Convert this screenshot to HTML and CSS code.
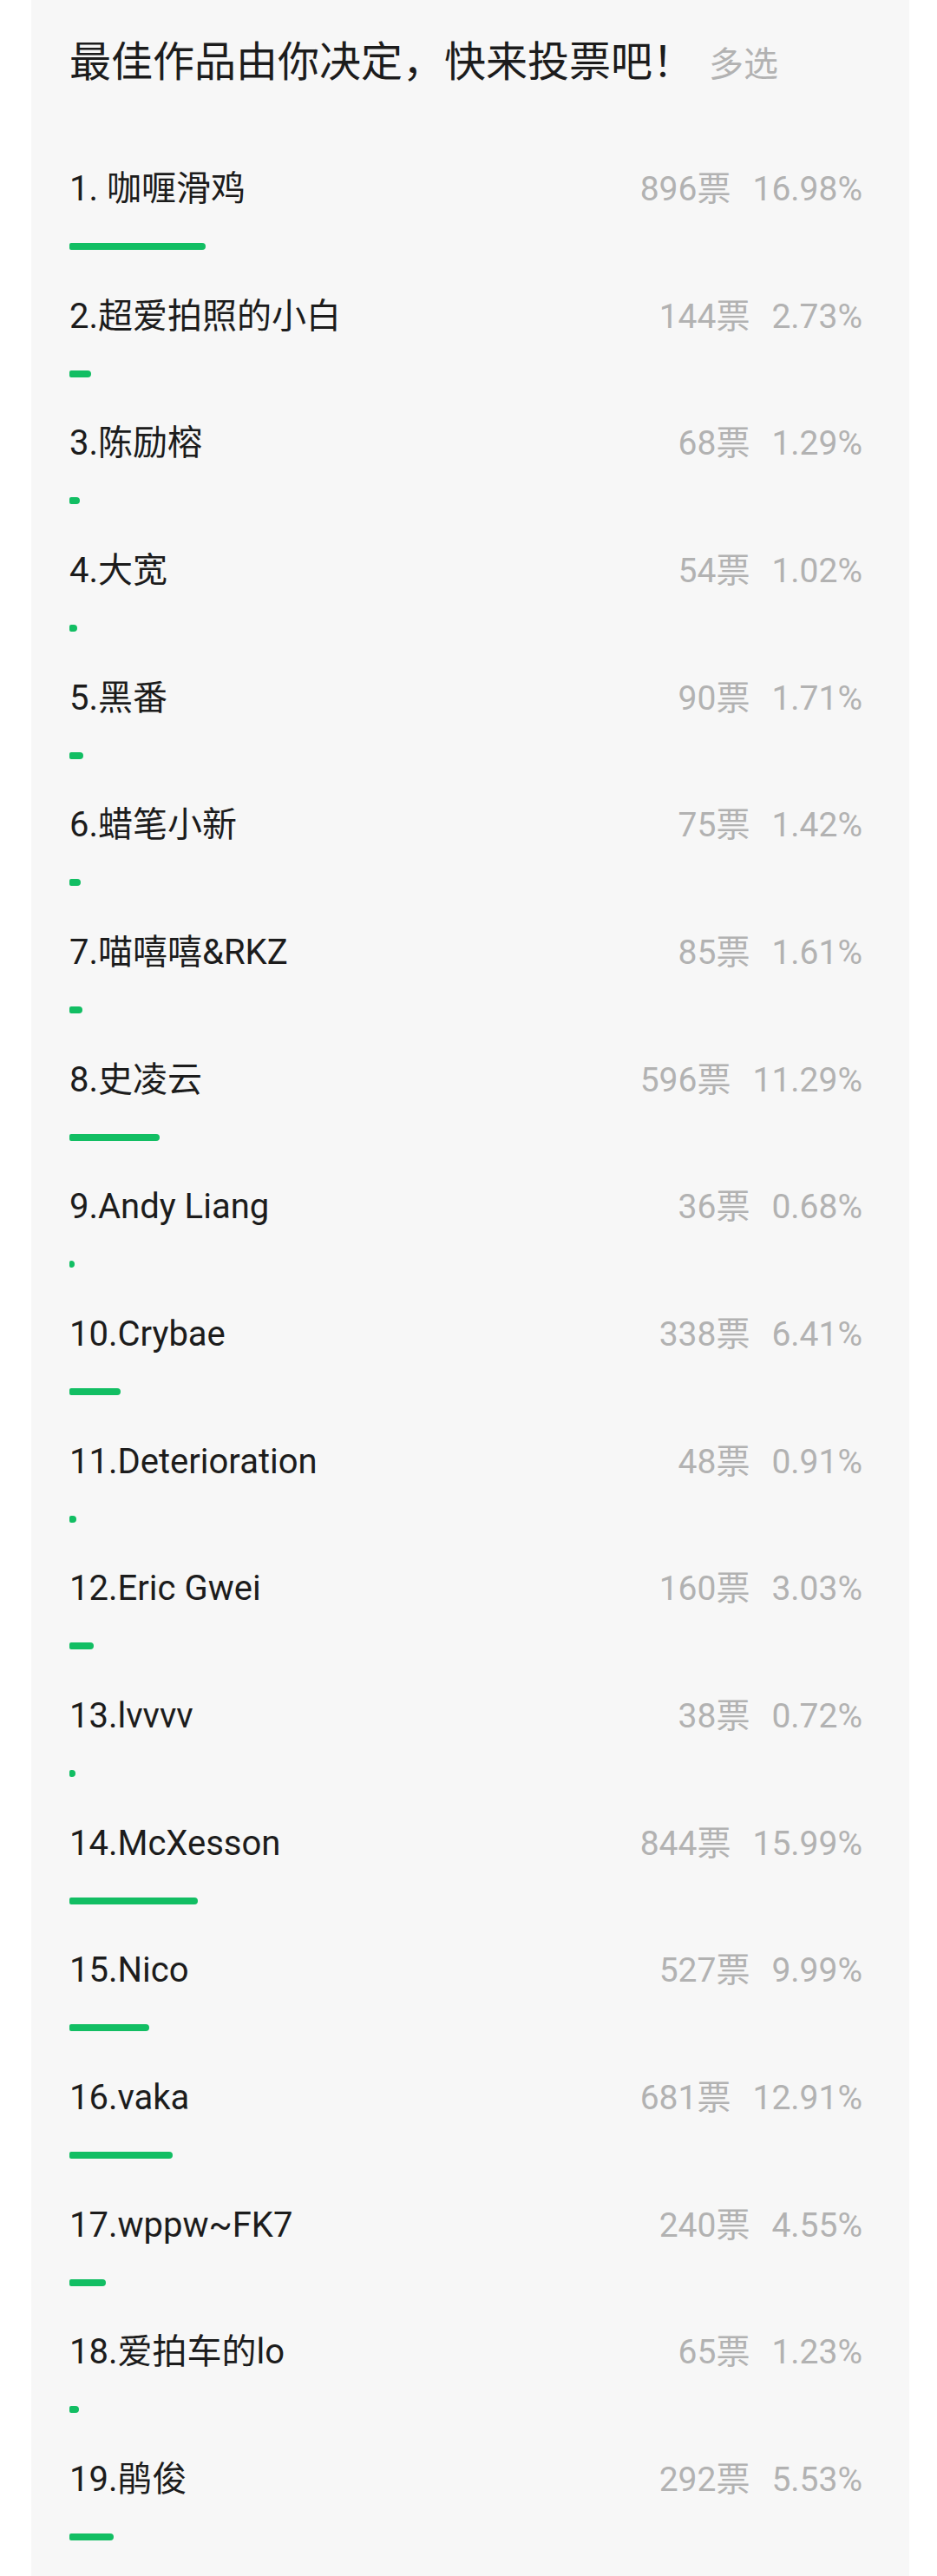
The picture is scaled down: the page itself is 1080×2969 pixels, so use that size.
FILE: index.html
```html
<!DOCTYPE html>
<html lang="zh-CN">
<head>
<meta charset="utf-8">
<title>投票</title>
<link rel="stylesheet" href="styles.css">
</head>
<body>
<div class="card">
  <div class="title-line">
    <span class="title">最佳作品由你决定，快来投票吧！</span>
    <span class="mode">多选</span>
  </div>
  <ul class="options">
    <li class="row"><div class="row-line"><span class="label">1. 咖喱滑鸡</span><span class="values"><span class="votes">896票</span><span class="pct">16.98%</span></span></div><div class="track"><div class="bar" style="width:16.98%"></div></div></li>
    <li class="row"><div class="row-line"><span class="label">2.超爱拍照的小白</span><span class="values"><span class="votes">144票</span><span class="pct">2.73%</span></span></div><div class="track"><div class="bar" style="width:2.73%"></div></div></li>
    <li class="row"><div class="row-line"><span class="label">3.陈励榕</span><span class="values"><span class="votes">68票</span><span class="pct">1.29%</span></span></div><div class="track"><div class="bar" style="width:1.29%"></div></div></li>
    <li class="row"><div class="row-line"><span class="label">4.大宽</span><span class="values"><span class="votes">54票</span><span class="pct">1.02%</span></span></div><div class="track"><div class="bar" style="width:1.02%"></div></div></li>
    <li class="row"><div class="row-line"><span class="label">5.黑番</span><span class="values"><span class="votes">90票</span><span class="pct">1.71%</span></span></div><div class="track"><div class="bar" style="width:1.71%"></div></div></li>
    <li class="row"><div class="row-line"><span class="label">6.蜡笔小新</span><span class="values"><span class="votes">75票</span><span class="pct">1.42%</span></span></div><div class="track"><div class="bar" style="width:1.42%"></div></div></li>
    <li class="row"><div class="row-line"><span class="label">7.喵嘻嘻&amp;RKZ</span><span class="values"><span class="votes">85票</span><span class="pct">1.61%</span></span></div><div class="track"><div class="bar" style="width:1.61%"></div></div></li>
    <li class="row"><div class="row-line"><span class="label">8.史凌云</span><span class="values"><span class="votes">596票</span><span class="pct">11.29%</span></span></div><div class="track"><div class="bar" style="width:11.29%"></div></div></li>
    <li class="row"><div class="row-line"><span class="label">9.Andy Liang</span><span class="values"><span class="votes">36票</span><span class="pct">0.68%</span></span></div><div class="track"><div class="bar" style="width:0.68%"></div></div></li>
    <li class="row"><div class="row-line"><span class="label">10.Crybae</span><span class="values"><span class="votes">338票</span><span class="pct">6.41%</span></span></div><div class="track"><div class="bar" style="width:6.41%"></div></div></li>
    <li class="row"><div class="row-line"><span class="label">11.Deterioration</span><span class="values"><span class="votes">48票</span><span class="pct">0.91%</span></span></div><div class="track"><div class="bar" style="width:0.91%"></div></div></li>
    <li class="row"><div class="row-line"><span class="label">12.Eric Gwei</span><span class="values"><span class="votes">160票</span><span class="pct">3.03%</span></span></div><div class="track"><div class="bar" style="width:3.03%"></div></div></li>
    <li class="row"><div class="row-line"><span class="label">13.lvvvv</span><span class="values"><span class="votes">38票</span><span class="pct">0.72%</span></span></div><div class="track"><div class="bar" style="width:0.72%"></div></div></li>
    <li class="row"><div class="row-line"><span class="label">14.McXesson</span><span class="values"><span class="votes">844票</span><span class="pct">15.99%</span></span></div><div class="track"><div class="bar" style="width:15.99%"></div></div></li>
    <li class="row"><div class="row-line"><span class="label">15.Nico</span><span class="values"><span class="votes">527票</span><span class="pct">9.99%</span></span></div><div class="track"><div class="bar" style="width:9.99%"></div></div></li>
    <li class="row"><div class="row-line"><span class="label">16.vaka</span><span class="values"><span class="votes">681票</span><span class="pct">12.91%</span></span></div><div class="track"><div class="bar" style="width:12.91%"></div></div></li>
    <li class="row"><div class="row-line"><span class="label">17.wppw~FK7</span><span class="values"><span class="votes">240票</span><span class="pct">4.55%</span></span></div><div class="track"><div class="bar" style="width:4.55%"></div></div></li>
    <li class="row"><div class="row-line"><span class="label">18.爱拍车的lo</span><span class="values"><span class="votes">65票</span><span class="pct">1.23%</span></span></div><div class="track"><div class="bar" style="width:1.23%"></div></div></li>
    <li class="row"><div class="row-line"><span class="label">19.鹃俊</span><span class="values"><span class="votes">292票</span><span class="pct">5.53%</span></span></div><div class="track"><div class="bar" style="width:5.53%"></div></div></li>
  </ul>
</div>
</body>
</html>
```
FILE: styles.css
```css
html, body {
  margin: 0;
  padding: 0;
  background: #ffffff;
}

body {
  font-family: Roboto, "Noto Sans CJK SC", sans-serif;
  color: #1c1c1c;
  overflow: hidden;
}

.card {
  margin: 0 32px 0 36px;
  background: #f7f7f7;
  padding: 40px 44px 0 44px;
  min-height: 2969px;
  box-sizing: border-box;
}

.title-line {
  display: flex;
  align-items: baseline;
  height: 64px;
  line-height: 64px;
}

.title {
  font-size: 48px;
  color: #1c1c1c;
}

.mode {
  font-size: 40px;
  color: #b2b2b2;
  margin-left: 17px;
}

.options {
  list-style: none;
  margin: 90px 0 0 0;
  padding: 0;
}

.row {
  height: 146.67px;
}

.row-line {
  display: flex;
  justify-content: space-between;
  align-items: baseline;
  height: 48px;
  line-height: 48px;
}

.label {
  font-size: 40px;
  color: #1c1c1c;
  white-space: nowrap;
}

.values {
  font-size: 39px;
  color: #b2b2b2;
  margin-right: 10px;
  white-space: nowrap;
}

.pct {
  margin-left: 25px;
}

.track {
  margin-top: 38px;
  height: 8px;
}

.bar {
  height: 8px;
  background: #12be63;
  border-radius: 2px 4px 4px 2px;
}
```
